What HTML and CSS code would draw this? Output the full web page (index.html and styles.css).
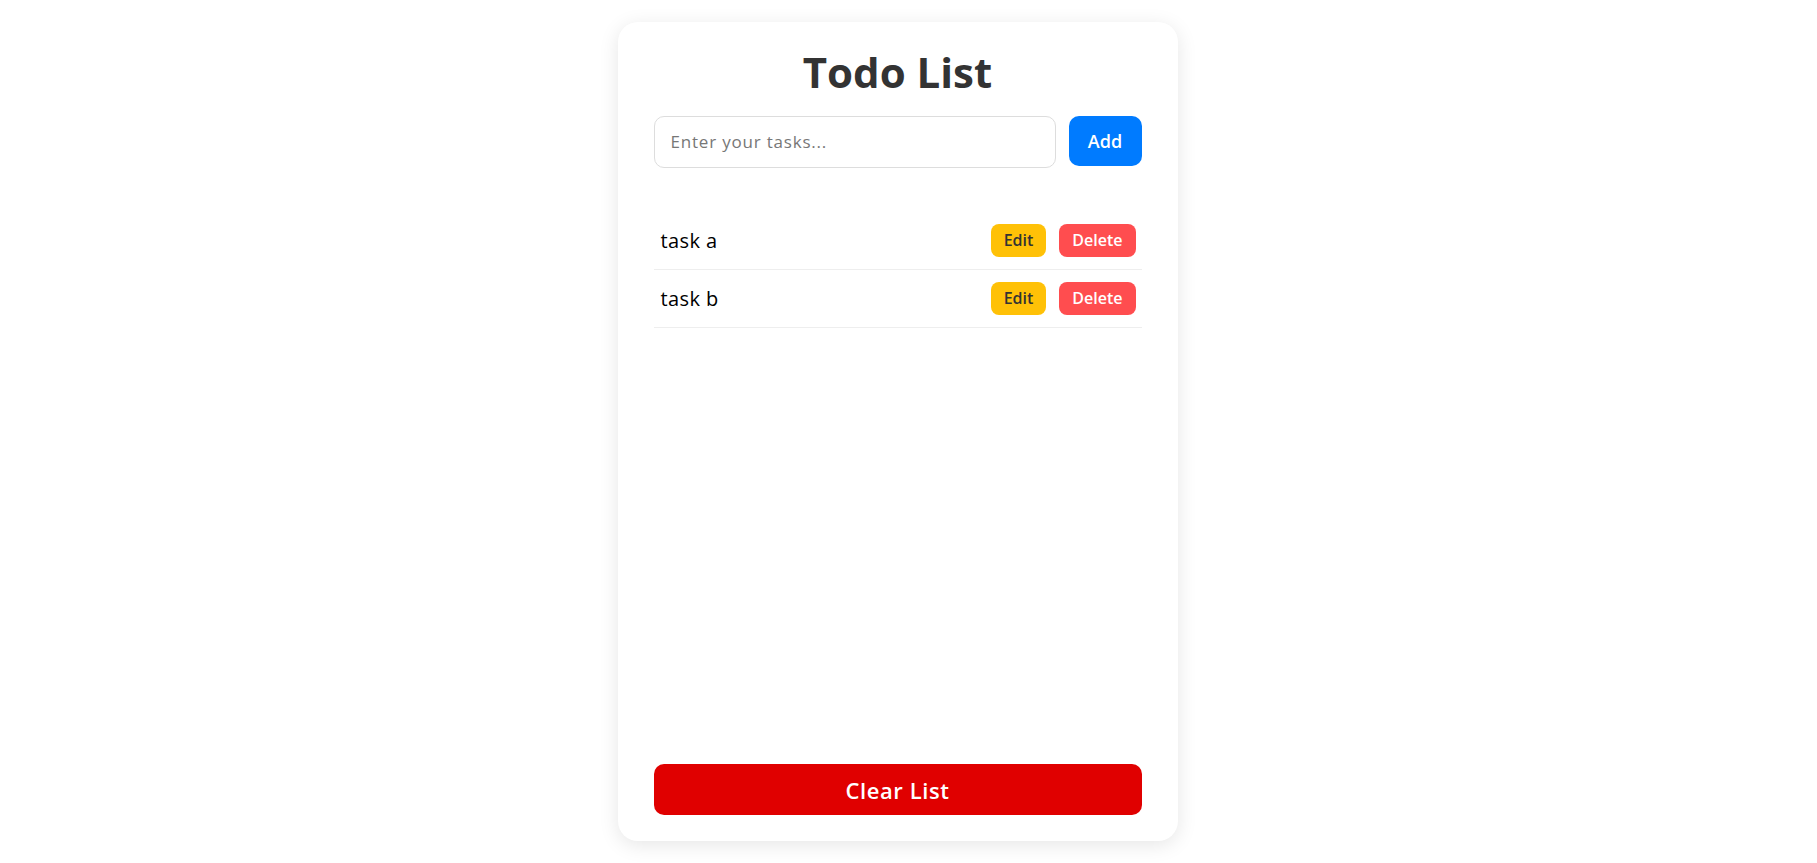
FILE: index.html
```html
<!doctype html>
<html>
    <head>
        <title>Todo List</title>
        <link rel="stylesheet" href="styles.css">
    </head>
    <body>
        <main class="card">
            <h1 class="title">Todo List</h1>
            <form class="entry">
                <input type="text" class="entry-input" placeholder="Enter your tasks..." />
                <button type="button" class="btn btn-add">Add</button>
            </form>
            <ul class="tasks">
                <li class="task">
                    <span class="task-name">task a</span>
                    <div class="task-actions">
                        <button type="button" class="btn btn-edit">Edit</button>
                        <button type="button" class="btn btn-delete">Delete</button>
                    </div>
                </li>
                <li class="task">
                    <span class="task-name">task b</span>
                    <div class="task-actions">
                        <button type="button" class="btn btn-edit">Edit</button>
                        <button type="button" class="btn btn-delete">Delete</button>
                    </div>
                </li>
            </ul>
            <button type="button" class="btn btn-clear">Clear List</button>
        </main>
    </body>
</html>
```

FILE: styles.css
```css
html,
body {
    margin: 0;
    height: 100%;
}

body {
    display: flex;
    align-items: center;
    justify-content: center;
    padding-right: 22px;
    box-sizing: border-box;
    background: #ffffff;
    font-family: "Open Sans", Arial, sans-serif;
}

.card {
    box-sizing: border-box;
    display: flex;
    flex-direction: column;
    width: 560px;
    height: 95vh;
    padding: 26px 36px;
    background: #ffffff;
    border-radius: 20px;
    box-shadow: 0 4px 20px rgba(0, 0, 0, 0.1);
}

.title {
    margin: 0 0 20px;
    font-size: 42px;
    line-height: 48px;
    font-weight: 700;
    text-align: center;
    color: #333333;
}

.entry {
    display: flex;
    align-items: flex-start;
    gap: 13px;
    margin: 0;
}

.entry-input {
    flex: 1;
    box-sizing: border-box;
    height: 52px;
    padding: 0 16px;
    border: 1px solid #dddddd;
    border-radius: 10px;
    font-family: inherit;
    font-size: 17px;
    letter-spacing: 0.8px;
    color: #333333;
    outline: none;
}

.entry-input::placeholder {
    color: #777777;
}

.btn {
    border: none;
    font-family: inherit;
    font-weight: 600;
    color: #ffffff;
    cursor: pointer;
}

.btn-add {
    width: 73px;
    height: 50px;
    border-radius: 10px;
    background: #007bff;
    font-size: 18px;
}

.tasks {
    list-style: none;
    margin: 44px 0 0;
    padding: 0;
}

.task {
    display: flex;
    align-items: center;
    justify-content: space-between;
    padding: 12px 6px 12px 7px;
    border-bottom: 1px solid #eeeeee;
}

.task-name {
    font-size: 20px;
    letter-spacing: 0.4px;
    color: #000000;
}

.task-actions {
    display: flex;
    gap: 13px;
}

.btn-edit,
.btn-delete {
    height: 33px;
    padding: 0 13px;
    border-radius: 8px;
    font-size: 16px;
}

.btn-edit {
    background: #ffc107;
    color: #333333;
}

.btn-delete {
    background: #ff4d4f;
}

.btn-clear {
    margin-top: auto;
    height: 51px;
    border-radius: 10px;
    background: #e00000;
    font-size: 22px;
    letter-spacing: 0.6px;
}
```
